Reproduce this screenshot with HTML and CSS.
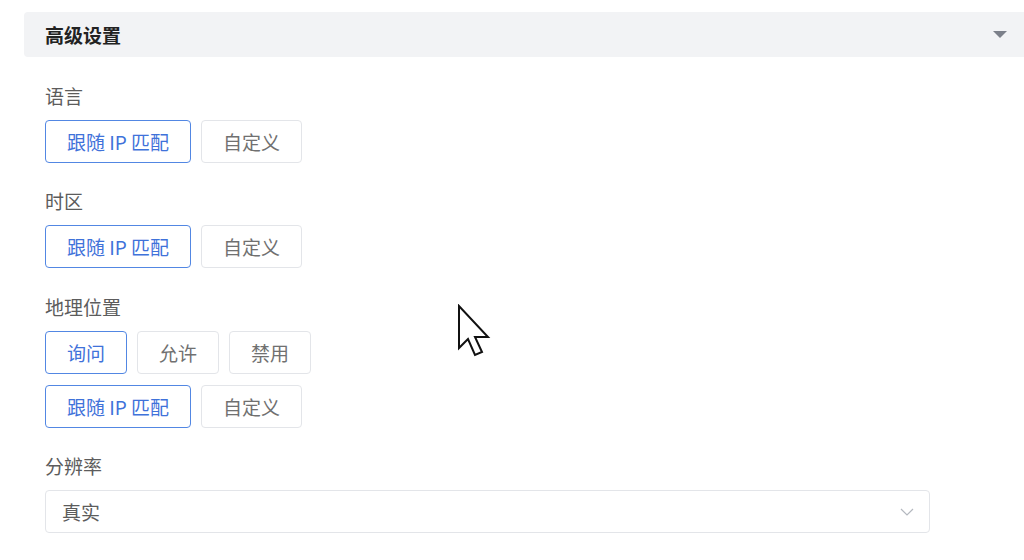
FILE: index.html
```html
<!DOCTYPE html>
<html lang="zh-CN">
<head>
  <meta charset="UTF-8" />
  <meta name="viewport" content="width=device-width, initial-scale=1.0"/>
  <title>高级设置</title>
  <link rel="stylesheet" href="styles.css">
</head>
<body>
  <div class="panel">
    <div class="panel-header">
      <span class="panel-title">高级设置</span>
      <span class="caret"></span>
    </div>

    <div class="panel-body">
      <div class="field">
        <div class="label">语言</div>
        <div class="options">
          <button class="opt active">跟随 IP 匹配</button>
          <button class="opt">自定义</button>
        </div>
      </div>

      <div class="field">
        <div class="label">时区</div>
        <div class="options">
          <button class="opt active">跟随 IP 匹配</button>
          <button class="opt">自定义</button>
        </div>
      </div>

      <div class="field">
        <div class="label">地理位置</div>
        <div class="options">
          <button class="opt active">询问</button>
          <button class="opt">允许</button>
          <button class="opt">禁用</button>
        </div>
        <div class="options">
          <button class="opt active">跟随 IP 匹配</button>
          <button class="opt">自定义</button>
        </div>
      </div>

      <div class="field">
        <div class="label">分辨率</div>
        <div class="select">
          <span>真实</span>
          <svg class="chevron" width="14" height="8" viewBox="0 0 14 8">
            <path d="M1 1 L7 7 L13 1" fill="none" stroke="#b4b8bf" stroke-width="1.2"/>
          </svg>
        </div>
      </div>
    </div>
  </div>

  <!-- mouse pointer in the capture -->
  <svg class="cursor" width="36" height="54" viewBox="0 0 36 54">
    <path d="M2 2 L2 44 L11 35 L18 51 L25 48 L18 33 L31 33 Z" fill="#fff" stroke="#111" stroke-width="2" stroke-linejoin="miter"/>
  </svg>
</body>
</html>
```

FILE: styles.css
```css
* {
  box-sizing: border-box;
  font-family: "Noto Sans CJK SC", "Noto Sans", sans-serif;
}

body {
  margin: 0;
  padding: 12px 0 0 24px;
  background: #fff;
  color: #5c5c5c;
  overflow: hidden;
}

.panel-header {
  display: flex;
  justify-content: space-between;
  align-items: center;
  height: 45px;
  padding: 0 17px 0 21px;
  background: #f2f3f5;
  border-radius: 4px 0 0 4px;
}

.panel-title {
  font-size: 19px;
  font-weight: 700;
  color: #222;
}

.caret {
  width: 0;
  height: 0;
  border-left: 7px solid transparent;
  border-right: 7px solid transparent;
  border-top: 7px solid #7c808a;
}

.panel-body {
  padding-left: 21px;
}

.field {
  margin-top: 26.4px;
}

.field:first-child {
  margin-top: 27px;
}

.label {
  font-size: 19px;
  line-height: 24px;
  color: #5c5c5c;
  margin-bottom: 12px;
}

.options {
  display: flex;
  gap: 10px;
}

.options + .options {
  margin-top: 11px;
}

.opt {
  height: 43px;
  padding: 0 21px;
  font-size: 19px;
  color: #707070;
  background: #fff;
  border: 1px solid #e3e5e9;
  border-radius: 4px;
  cursor: pointer;
}

.opt.active {
  color: #3f72da;
  border-color: #5287e3;
}

.select {
  display: flex;
  justify-content: space-between;
  align-items: center;
  width: 885px;
  height: 43px;
  padding: 0 15px 0 16px;
  border: 1px solid #e3e5e9;
  border-radius: 4px;
  font-size: 19px;
  color: #5c5c5c;
}

.cursor {
  position: absolute;
  left: 457px;
  top: 304px;
}
```
